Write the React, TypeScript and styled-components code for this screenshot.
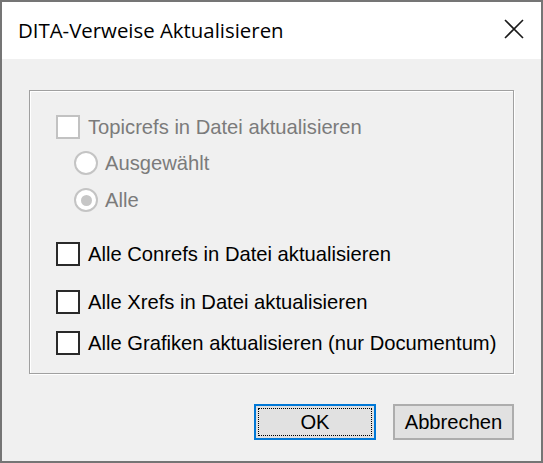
import React from 'react'
import styled, { createGlobalStyle } from 'styled-components'

const GlobalStyle = createGlobalStyle`
  html, body {
    margin: 0;
    padding: 0;
    background: #f0f0f0;
  }
  * { box-sizing: border-box; }
`

const Window = styled.div`
  width: 543px;
  height: 463px;
  display: flex;
  flex-direction: column;
  border: 2px solid #757575;
  background: #f0f0f0;
  font-family: "Liberation Sans", Arial, sans-serif;
`

const TitleBar = styled.div`
  height: 57px;
  flex-shrink: 0;
  background: #ffffff;
  display: flex;
  align-items: center;
  justify-content: space-between;
  padding: 0 17px 0 16px;
`

const Title = styled.div`
  font-family: "Segoe UI", "Open Sans", "Noto Sans", sans-serif;
  font-size: 20.4px;
  color: #000;
  margin-top: -2px;
`

const CloseButton = styled.div`
  width: 20px;
  height: 20px;
  display: flex;
  align-items: center;
  justify-content: center;
  margin-top: -4px;
`

const Body = styled.div`
  flex: 1;
  display: flex;
  flex-direction: column;
  padding: 31px 27px 0 27px;
`

const GroupBox = styled.div`
  height: 284px;
  border: 1px solid #a0a0a0;
  box-shadow: inset 1px 1px 0 #ffffff, 1px 1px 0 #ffffff;
  display: flex;
  flex-direction: column;
  padding: 24px 0 0 26px;
`

const Row = styled.label<{ $top: number; $indent?: number }>`
  display: flex;
  align-items: center;
  height: 24px;
  margin-top: ${(p) => p.$top}px;
  margin-left: ${(p) => p.$indent || 0}px;
  font-size: 20.2px;
  color: #000;
  white-space: nowrap;
`

const Box = styled.span<{ $disabled?: boolean }>`
  width: 24px;
  height: 24px;
  flex-shrink: 0;
  border: 2px solid ${(p) => (p.$disabled ? '#c2c2c2' : '#2a2a2a')};
  background: #ffffff;
  margin-right: 8px;
`

const Radio = styled.span<{ $checked?: boolean }>`
  width: 24px;
  height: 24px;
  flex-shrink: 0;
  border-radius: 50%;
  border: 2px solid #c4c4c4;
  background: #ffffff;
  margin-right: 7px;
  display: flex;
  align-items: center;
  justify-content: center;
  &::after {
    content: '';
    width: 11px;
    height: 11px;
    border-radius: 50%;
    background: ${(p) => (p.$checked ? '#c6c6c6' : 'transparent')};
  }
`

const Label = styled.span<{ $disabled?: boolean }>`
  color: ${(p) => (p.$disabled ? '#7b7b7b' : '#000')};
  margin-top: 1px;
`

const ButtonRow = styled.div`
  display: flex;
  justify-content: flex-end;
  gap: 17px;
  margin-top: 30px;
`

const Button = styled.div<{ $primary?: boolean; $w: number }>`
  width: ${(p) => p.$w}px;
  height: 36px;
  background: #e1e1e1;
  border: 2px solid ${(p) => (p.$primary ? '#0078d7' : '#adadad')};
  display: flex;
  padding: 2px;
  font-size: 20.2px;
  color: #000;
`

const ButtonInner = styled.span<{ $focus?: boolean }>`
  flex: 1;
  display: flex;
  align-items: center;
  justify-content: center;
  border: 1px dotted ${(p) => (p.$focus ? '#000' : 'transparent')};
`

export default function App() {
  return (
    <>
      <GlobalStyle />
      <Window>
        <TitleBar>
          <Title>DITA-Verweise Aktualisieren</Title>
          <CloseButton>
            <svg width="20" height="20" viewBox="0 0 20 20">
              <path d="M1 1 L19 19 M19 1 L1 19" stroke="#1a1a1a" strokeWidth="1.6" fill="none" />
            </svg>
          </CloseButton>
        </TitleBar>
        <Body>
          <GroupBox>
            <Row $top={0}>
              <Box $disabled />
              <Label $disabled>Topicrefs in Datei aktualisieren</Label>
            </Row>
            <Row $top={12} $indent={18}>
              <Radio />
              <Label $disabled>Ausgewählt</Label>
            </Row>
            <Row $top={13} $indent={18}>
              <Radio $checked />
              <Label $disabled>Alle</Label>
            </Row>
            <Row $top={30}>
              <Box />
              <Label>Alle Conrefs in Datei aktualisieren</Label>
            </Row>
            <Row $top={24}>
              <Box />
              <Label>Alle Xrefs in Datei aktualisieren</Label>
            </Row>
            <Row $top={17}>
              <Box />
              <Label>Alle Grafiken aktualisieren (nur Documentum)</Label>
            </Row>
          </GroupBox>
          <ButtonRow>
            <Button $primary $w={122}>
              <ButtonInner $focus>OK</ButtonInner>
            </Button>
            <Button $w={121}>
              <ButtonInner>Abbrechen</ButtonInner>
            </Button>
          </ButtonRow>
        </Body>
      </Window>
    </>
  )
}
